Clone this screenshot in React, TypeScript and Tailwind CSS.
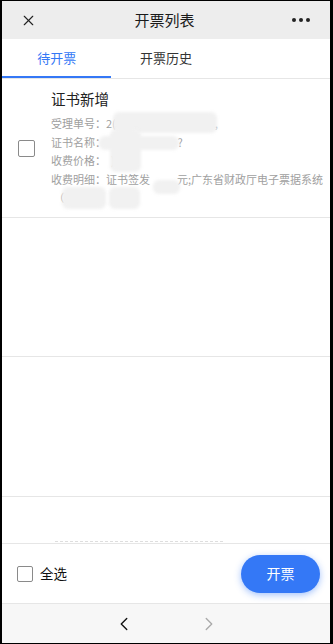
import { ChevronLeft, ChevronRight, X } from "lucide-react";
import type { ReactNode } from "react";

const FONT = { fontFamily: '"Noto Sans CJK SC", "Noto Sans", sans-serif' };

function Checkbox({ size = "h-[17px] w-[17px]" }: { size?: string }) {
  return <span className={`block shrink-0 rounded-[2px] border-[1.5px] border-[#8a8a8a] bg-white ${size}`} />;
}

function Blur({ className }: { className: string }) {
  return <span className={`pointer-events-none absolute rounded-md bg-[#f1f1f1] blur-[1.5px] ${className}`} />;
}

function Meta({ children }: { children: ReactNode }) {
  return <p className="h-[18.5px] whitespace-pre text-[11px] leading-[18.5px] text-[#a0a0a0]">{children}</p>;
}

export default function App() {
  return (
    <div className="flex h-[644px] w-[333px] flex-col overflow-hidden border-b border-l-2 border-r-[3px] border-t border-black bg-white" style={FONT}>
      <header className="flex h-[38px] shrink-0 items-center justify-between bg-[#ededed] px-[18px]">
        <X className="h-[17px] w-[17px] text-[#222]" strokeWidth={1.6} />
        <h1 className="text-[15px] text-[#1a1a1a]">开票列表</h1>
        <div className="flex gap-[3px] pr-[2px]">
          <span className="h-[4px] w-[4px] rounded-full bg-[#222]" />
          <span className="h-[4px] w-[4px] rounded-full bg-[#222]" />
          <span className="h-[4px] w-[4px] rounded-full bg-[#222]" />
        </div>
      </header>

      <nav className="grid h-[40px] shrink-0 grid-cols-3 border-b border-[#e6e6e6] text-[13px]">
        <div className="flex items-center justify-center border-b-2 border-[#3478f6] pt-[1px] text-[#3478f6]">待开票</div>
        <div className="flex items-center justify-center pb-[1px] text-[#333]">开票历史</div>
        <div />
      </nav>

      <div className="min-h-0 flex-1 overflow-hidden">
        <div className="relative flex h-[139px] items-center border-b border-[#e6e6e6]">
          <div className="flex w-[49px] justify-center">
            <Checkbox />
          </div>
          <div className="flex h-full flex-col pt-[10px]">
            <h2 className="mb-[5px] h-[20px] text-[14.5px] leading-[20px] text-[#222]">证书新增</h2>
            <Meta>{"受理单号：2(　　　　　　　　　,"}</Meta>
            <Meta>{"证书名称：　　　　　　　?"}</Meta>
            <Meta>{"收费价格：  )"}</Meta>
            <Meta>{"收费明细：证书签发　　  元;广东省财政厅电子票据系统"}</Meta>
            <Meta>{" （"}</Meta>
          </div>
          <Blur className="left-[111px] top-[33px] h-[21px] w-[104px]" />
          <Blur className="left-[108px] top-[50px] h-[43px] w-[31px]" />
          <Blur className="left-[97px] top-[57px] h-[14px] w-[80px] bg-[#e9e9e9]" />
          <Blur className="left-[151px] top-[101px] h-[14px] w-[27px]" />
          <Blur className="left-[60px] top-[108px] h-[22px] w-[44px]" />
          <Blur className="left-[107px] top-[108px] h-[22px] w-[31px]" />
        </div>
        <div className="h-[139px] border-b border-[#e6e6e6]" />
        <div className="h-[140px] border-b border-[#e6e6e6]" />
        <div className="ml-[53px] mt-[44px] h-[1px] w-[170px] bg-[repeating-linear-gradient(90deg,#dedede_0_3px,transparent_3px_5px)]" />
      </div>

      <footer className="flex h-[60px] shrink-0 items-center justify-between border-t border-[#e6e6e6] bg-white pl-[15px] pr-[10px]">
        <div className="flex items-center gap-[7px]">
          <Checkbox size="h-[16px] w-[16px]" />
          <span className="text-[13.5px] text-[#111]">全选</span>
        </div>
        <button className="h-[38px] w-[79px] rounded-full bg-[#3478f6] text-[14px] text-white shadow-[0_2px_7px_rgba(52,120,246,0.45)]">开票</button>
      </footer>

      <div className="flex h-[40px] shrink-0 items-center justify-center gap-[63px] border-t border-[#e6e6e6] bg-[#f7f7f7]">
        <ChevronLeft className="h-[22px] w-[22px] text-[#111]" strokeWidth={1.5} />
        <ChevronRight className="h-[22px] w-[22px] text-[#aaa]" strokeWidth={1.5} />
      </div>
    </div>
  );
}
